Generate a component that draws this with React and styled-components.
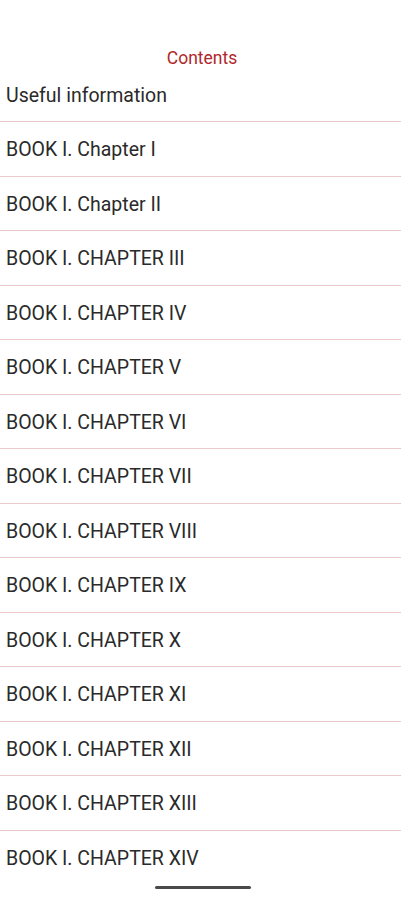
import React from 'react';
import styled, { createGlobalStyle } from 'styled-components';

const GlobalStyle = createGlobalStyle`
  html, body {
    margin: 0;
    padding: 0;
    background: #ffffff;
  }
  body {
    font-family: Roboto, 'Noto Sans', 'Liberation Sans', sans-serif;
  }
`;

const Screen = styled.div`
  width: 404px;
  height: 900px;
  overflow: hidden;
  position: relative;
  background: #ffffff;
  display: flex;
  flex-direction: column;
`;

const Title = styled.h1`
  margin: 48px 0 0;
  height: 20px;
  font-size: 17.5px;
  line-height: 20px;
  font-weight: 400;
  color: #b0282c;
  text-align: center;
`;

const List = styled.ul`
  list-style: none;
  margin: 0;
  padding: 0;
`;

const Item = styled.li`
  padding: 17px 6px 14px;
  font-size: 19.5px;
  line-height: 22px;
  color: #2a2a2a;
  border-bottom: ${({ $last }) => ($last ? 'none' : '1px solid #e9c9cc')};
  margin-right: 3px;
  white-space: nowrap;

  &:nth-child(even) {
    padding-bottom: 15px;
  }
`;

const HomeBar = styled.div`
  position: absolute;
  left: 155px;
  top: 886px;
  width: 96px;
  height: 3px;
  border-radius: 2px;
  background: #4a4a4a;
`;

const chapters = [
  'Useful information',
  'BOOK I. Chapter I',
  'BOOK I. Chapter II',
  'BOOK I. CHAPTER III',
  'BOOK I. CHAPTER IV',
  'BOOK I. CHAPTER V',
  'BOOK I. CHAPTER VI',
  'BOOK I. CHAPTER VII',
  'BOOK I. CHAPTER VIII',
  'BOOK I. CHAPTER IX',
  'BOOK I. CHAPTER X',
  'BOOK I. CHAPTER XI',
  'BOOK I. CHAPTER XII',
  'BOOK I. CHAPTER XIII',
  'BOOK I. CHAPTER XIV',
];

const App = () => (
  <>
    <GlobalStyle />
    <Screen>
      <Title>Contents</Title>
      <List>
        {chapters.map((name, i) => (
          <Item key={name} $last={i === chapters.length - 1}>
            {name}
          </Item>
        ))}
      </List>
      <HomeBar />
    </Screen>
  </>
);

export default App;
